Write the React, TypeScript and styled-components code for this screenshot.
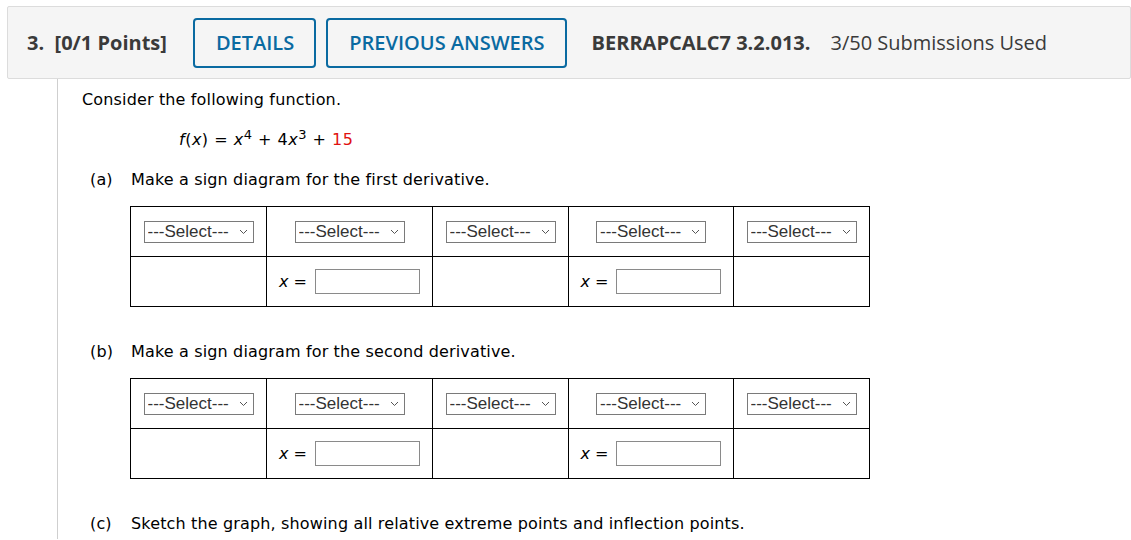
import React from 'react';
import styled, { createGlobalStyle } from 'styled-components';

const GlobalStyle = createGlobalStyle`
  body {
    margin: 0;
    background: #ffffff;
    font-family: "DejaVu Sans", Verdana, sans-serif;
    color: #000;
  }
`;

const Header = styled.div`
  display: flex;
  align-items: center;
  margin: 6px 0 0 7px;
  height: 71px;
  padding-left: 19px;
  background: #f5f5f5;
  border: 1px solid #dcdcdc;
  border-radius: 2px;
  font-family: "Open Sans", "Liberation Sans", sans-serif;
  font-size: 20px;
  color: #3a3a3a;
`;

const Label = styled.span`
  font-weight: 700;
  margin-right: 26px;
  white-space: pre;
`;

const OutlineButton = styled.button`
  height: 50px;
  padding: 0 20px 0 21px;
  margin-right: 10px;
  background: transparent;
  border: 2px solid #0a6aa1;
  border-radius: 4px;
  color: #0a6aa1;
  font-family: "Open Sans", "Liberation Sans", sans-serif;
  font-size: 20px;
  font-weight: 600;
`;

const Code = styled.span`
  font-weight: 700;
  margin-left: 15px;
  margin-right: 20px;
`;

const Body = styled.div`
  margin-left: 57px;
  border-left: 1px solid #cfcfcf;
  padding: 12px 0 6px 24px;
  font-size: 16px;
  line-height: 18px;
  letter-spacing: 0.15px;
`;

const Para = styled.p`
  margin: 0;
`;

const Formula = styled.p`
  margin: 22px 0 0 97px;
  letter-spacing: 0.5px;

  sup {
    line-height: 0;
    font-size: 13px;
  }
`;

const Var = styled.i``;

const Red = styled.span`
  color: #e0120f;
`;

const Part = styled.div<{ top: number }>`
  display: flex;
  margin: ${(p) => p.top}px 0 0 8px;
`;

const PartTag = styled.span`
  width: 41px;
`;

const Grid = styled.table`
  border-collapse: collapse;
  margin: 17px 0 0 48px;
`;

const Cell = styled.td<{ w: number }>`
  width: ${(p) => p.w}px;
  height: 49px;
  padding: 0;
  border: 1px solid #000;
  text-align: center;
  vertical-align: middle;
`;

const SelectBox = styled.span`
  position: relative;
  display: inline-block;
  vertical-align: middle;
`;

const NativeSelect = styled.select`
  appearance: none;
  width: 110px;
  height: 22px;
  padding: 0 0 0 3px;
  border: 1px solid #7a7a7a;
  border-radius: 0;
  background: #fff;
  color: #333;
  font-family: "Liberation Sans", Arial, sans-serif;
  font-size: 17px;
`;

const Chevron = styled.svg`
  position: absolute;
  right: 6px;
  top: 8px;
  pointer-events: none;
`;

const Eq = styled.span`
  display: inline-flex;
  align-items: center;
  gap: 8px;
  letter-spacing: 0;
`;

const TextBox = styled.input`
  width: 105px;
  height: 25px;
  box-sizing: border-box;
  border: 1px solid #8a8a8a;
  padding: 0;
`;

const widths = [135, 165, 135, 164, 135];

function Select() {
  return (
    <SelectBox>
      <NativeSelect defaultValue="">
        <option value="">---Select---</option>
      </NativeSelect>
      <Chevron width="9" height="6" viewBox="0 0 9 6">
        <path d="M1 1 L4.5 4.5 L8 1" fill="none" stroke="#555" strokeWidth="1" />
      </Chevron>
    </SelectBox>
  );
}

function XInput() {
  return (
    <Eq>
      <span><Var>x</Var> =</span>
      <TextBox type="text" />
    </Eq>
  );
}

function SignTable() {
  return (
    <Grid>
      <tbody>
        <tr>
          {widths.map((w, i) => (
            <Cell key={i} w={w}><Select /></Cell>
          ))}
        </tr>
        <tr>
          {widths.map((w, i) => (
            <Cell key={i} w={w}>{i === 1 || i === 3 ? <XInput /> : null}</Cell>
          ))}
        </tr>
      </tbody>
    </Grid>
  );
}

export default function App() {
  return (
    <>
      <GlobalStyle />
      <Header>
        <Label>3.  [0/1 Points]</Label>
        <OutlineButton>DETAILS</OutlineButton>
        <OutlineButton>PREVIOUS ANSWERS</OutlineButton>
        <Code>BERRAPCALC7 3.2.013.</Code>
        <span>3/50 Submissions Used</span>
      </Header>
      <Body>
        <Para>Consider the following function.</Para>
        <Formula>
          <Var>f</Var>(<Var>x</Var>) = <Var>x</Var><sup>4</sup> + 4<Var>x</Var><sup>3</sup> + <Red>15</Red>
        </Formula>
        <Part top={22}>
          <PartTag>(a)</PartTag>
          <span>Make a sign diagram for the first derivative.</span>
        </Part>
        <SignTable />
        <Part top={36}>
          <PartTag>(b)</PartTag>
          <span>Make a sign diagram for the second derivative.</span>
        </Part>
        <SignTable />
        <Part top={36}>
          <PartTag>(c)</PartTag>
          <span>Sketch the graph, showing all relative extreme points and inflection points.</span>
        </Part>
      </Body>
    </>
  );
}
